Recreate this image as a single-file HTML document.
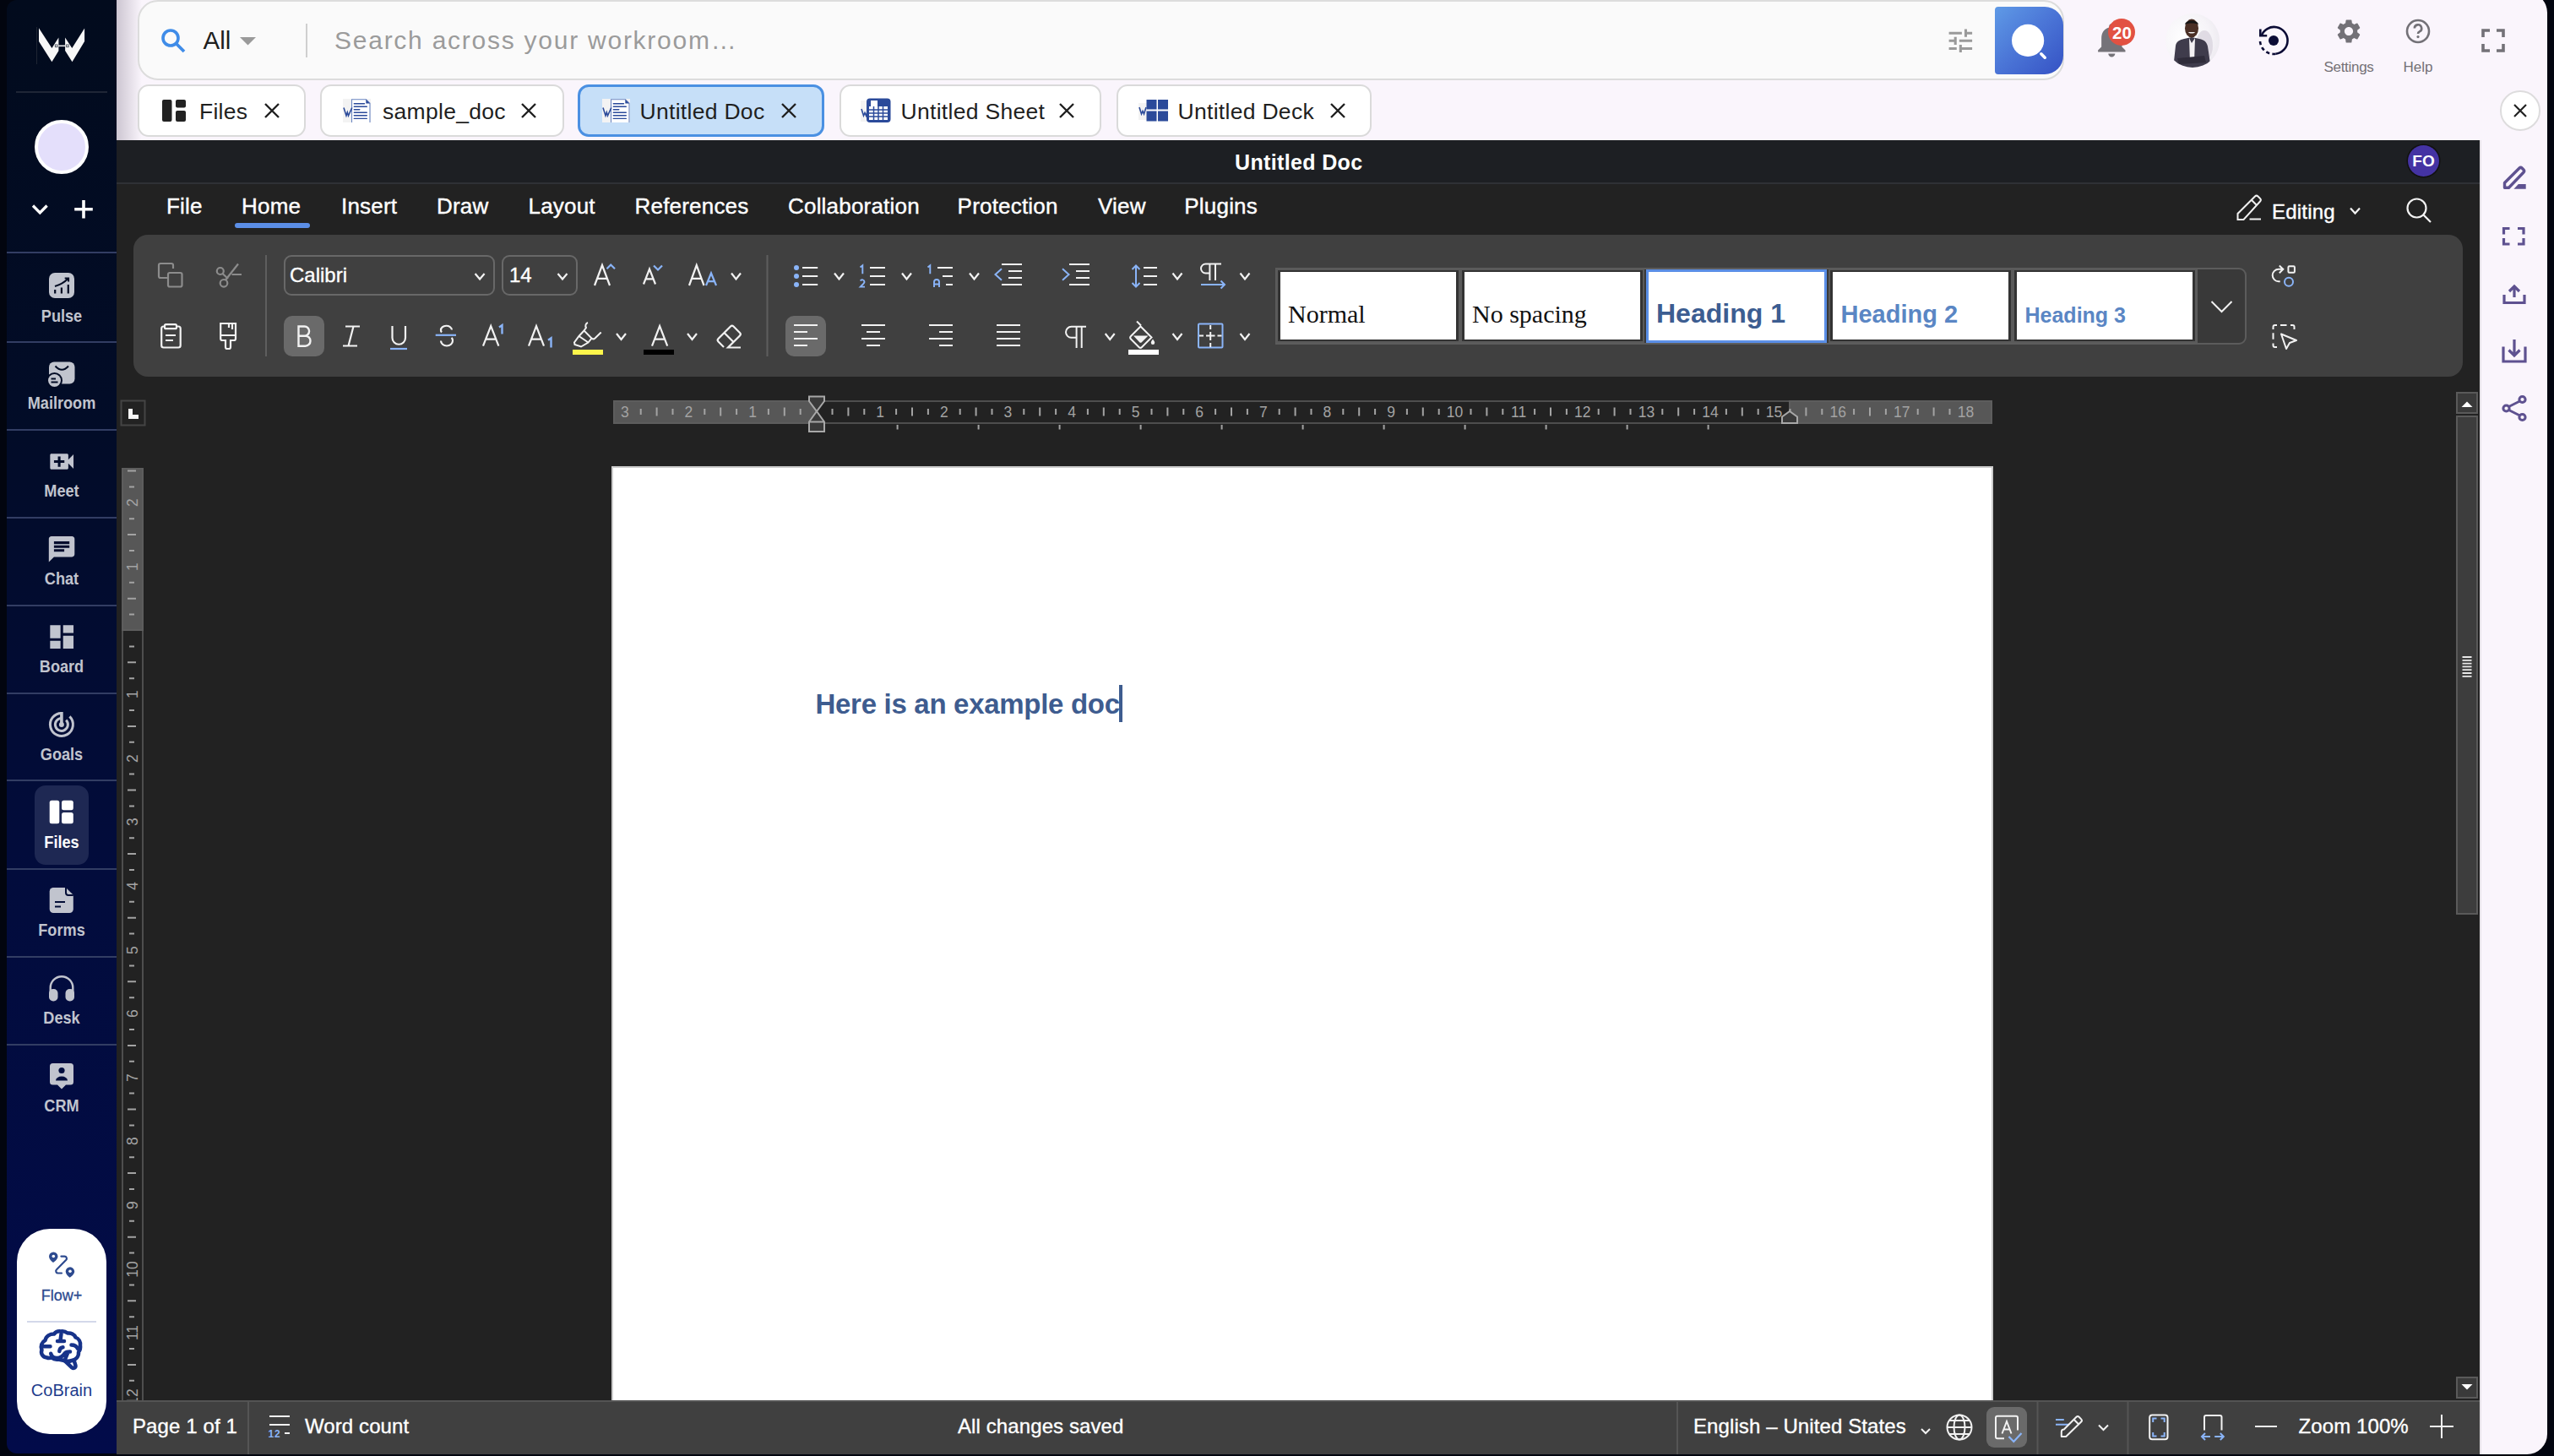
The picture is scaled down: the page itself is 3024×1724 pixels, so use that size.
<!DOCTYPE html>
<html><head><meta charset="utf-8">
<style>
*{box-sizing:border-box;margin:0;padding:0}
html,body{width:3024px;height:1724px;overflow:hidden}
body{position:relative;background:#02050f;font-family:"Liberation Sans",sans-serif}
.a{position:absolute}
svg{position:absolute;overflow:visible}
.sb{left:8px;top:0;width:130px;height:1721px;border-radius:12px 0 0 12px;background:linear-gradient(180deg,#020b1d 0%,#020c28 30%,#020c3c 60%,#020b4a 100%)}
.sep{left:8px;width:130px;height:3px;background:#2a3450}
.nav{left:0;width:146px;text-align:center;font-weight:bold;font-size:18px;color:#c3c5cf}
.shell{left:138px;top:-9px;width:2878px;height:1730.8px;background:#faf5fc;border-radius:0 24px 24px 0}
.tab{top:100px;height:62px;border:2px solid #dadada;border-radius:13px;background:#fff}
.tab .t{top:15px;font-size:26.5px;color:#1f1f1f;white-space:nowrap}
.menu{top:232px;font-size:26px;color:#fff;white-space:nowrap;letter-spacing:0.2px;-webkit-text-stroke:0.4px #fff}
.tb{stroke:#e8e8e8;fill:none;stroke-width:2.2}
.st{font-size:24px;color:#fff;white-space:nowrap;letter-spacing:0.1px;-webkit-text-stroke:0.35px #fff}
</style></head><body>
<!-- sidebar -->
<div class="a sb"></div>
<div class="a shell"></div>
<div class="a" style="left:43px;top:32px;width:1px;height:44px;background:#1e2533"></div>
<svg style="left:44px;top:32px" width="58" height="44" viewBox="0 0 58 44"><path d="M2 1.2L17.4 25.1L25.4 12.6V28.3L17.4 41.2L2 17.1Z" fill="#f7f7f7"/><path d="M56.1 1.4L41.3 24.9L33.1 12.4V28.1L41.5 41.2L56.1 17.1Z" fill="#f7f7f7"/><path d="M24.5 22.3H34" stroke="#e8e8e8" stroke-width="1.6"/><rect x="21.4" y="21" width="2.6" height="2.6" fill="none" stroke="#555b66" stroke-width="1"/><rect x="34.6" y="21" width="2.6" height="2.6" fill="none" stroke="#555b66" stroke-width="1"/></svg>
<div class="a" style="left:19px;top:108px;width:108px;height:2px;background:#1f2636"></div>
<div class="a" style="left:41px;top:142px;width:64px;height:64px;border-radius:50%;background:#e4dffb;border:4px solid #fff"></div>
<svg style="left:0;top:0" width="140" height="1724" viewBox="0 0 140 1724"><path d="M39 243.5L47.3 251.8L55.6 243.5" fill="none" stroke="#fff" stroke-width="3.3"/><path d="M99 237V258.5M88.2 247.7H109.8" stroke="#fff" stroke-width="3.6"/></svg>
<div class="a" style="left:8px;top:298.1px;width:130px;height:2.2px;background:#323d63"></div>
<div class="a" style="left:8px;top:403.9px;width:130px;height:2.2px;background:#323d63"></div>
<div class="a" style="left:8px;top:507.9px;width:130px;height:2.2px;background:#323d63"></div>
<div class="a" style="left:8px;top:611.5px;width:130px;height:2.2px;background:#323d63"></div>
<div class="a" style="left:8px;top:716.3px;width:130px;height:2.2px;background:#323d63"></div>
<div class="a" style="left:8px;top:819.5px;width:130px;height:2.2px;background:#323d63"></div>
<div class="a" style="left:8px;top:923.3px;width:130px;height:2.2px;background:#323d63"></div>
<div class="a" style="left:8px;top:1027.5px;width:130px;height:2.2px;background:#323d63"></div>
<div class="a" style="left:8px;top:1131.5px;width:130px;height:2.2px;background:#323d63"></div>
<div class="a" style="left:8px;top:1235.7px;width:130px;height:2.2px;background:#323d63"></div>
<div class="a" style="left:41px;top:930px;width:64px;height:94px;border-radius:13px;background:#1e2853"></div>
<div class="a" style="left:8px;top:363.6px;width:130px;text-align:center;font-size:20.5px;line-height:1;font-weight:bold;color:#c1c4ce;transform:scaleX(0.885)">Pulse</div>
<div class="a" style="left:8px;top:467.1px;width:130px;text-align:center;font-size:20.5px;line-height:1;font-weight:bold;color:#c1c4ce;transform:scaleX(0.885)">Mailroom</div>
<div class="a" style="left:8px;top:571.1px;width:130px;text-align:center;font-size:20.5px;line-height:1;font-weight:bold;color:#c1c4ce;transform:scaleX(0.885)">Meet</div>
<div class="a" style="left:8px;top:674.6px;width:130px;text-align:center;font-size:20.5px;line-height:1;font-weight:bold;color:#c1c4ce;transform:scaleX(0.885)">Chat</div>
<div class="a" style="left:8px;top:778.8px;width:130px;text-align:center;font-size:20.5px;line-height:1;font-weight:bold;color:#c1c4ce;transform:scaleX(0.885)">Board</div>
<div class="a" style="left:8px;top:882.9px;width:130px;text-align:center;font-size:20.5px;line-height:1;font-weight:bold;color:#c1c4ce;transform:scaleX(0.885)">Goals</div>
<div class="a" style="left:8px;top:986.9px;width:130px;text-align:center;font-size:20.5px;line-height:1;font-weight:bold;color:#fff;transform:scaleX(0.885)">Files</div>
<div class="a" style="left:8px;top:1090.6px;width:130px;text-align:center;font-size:20.5px;line-height:1;font-weight:bold;color:#c1c4ce;transform:scaleX(0.885)">Forms</div>
<div class="a" style="left:8px;top:1195.0px;width:130px;text-align:center;font-size:20.5px;line-height:1;font-weight:bold;color:#c1c4ce;transform:scaleX(0.885)">Desk</div>
<div class="a" style="left:8px;top:1299.1px;width:130px;text-align:center;font-size:20.5px;line-height:1;font-weight:bold;color:#c1c4ce;transform:scaleX(0.885)">CRM</div>
<svg style="left:0;top:0" width="140" height="1724" viewBox="0 0 140 1724"><rect x="58" y="323" width="30" height="30" rx="7" fill="#c1c4ce"/><path d="M65.2 343V347.5M72.9 340.5V347.5M80.8 337V347.5" stroke="#020b22" stroke-width="2.2"/><path d="M65 339Q74 336.5 80.5 330M76.7 329.4H81.1V333.6" fill="none" stroke="#020b22" stroke-width="2"/><rect x="58" y="428.5" width="30.5" height="26" rx="6" fill="#c1c4ce"/><path d="M65.5 433.5Q73.3 442 81 433.5" fill="none" stroke="#020b24" stroke-width="2"/><circle cx="64.5" cy="450.5" r="9.5" fill="#020b24"/><circle cx="64.5" cy="450.5" r="7.5" fill="#c1c4ce"/><path d="M60.5 448.5H66M60.5 452.5H68.5" stroke="#020b24" stroke-width="1.8"/><path transform="translate(54.7 528.06) scale(1.54)" fill="#c1c4ce" d="M17 10.5V7c0-.55-.45-1-1-1H4c-.55 0-1 .45-1 1v10c0 .55.45 1 1 1h12c.55 0 1-.45 1-1v-3.5l4 4v-11l-4 4zM14 13h-3v3H9v-3H6v-2h3V8h2v3h3v2z"/><path transform="translate(54.75 631.95) scale(1.525)" fill="#c1c4ce" d="M20 2H4c-1.1 0-1.99.9-1.99 2L2 22l4-4h14c1.1 0 2-.9 2-2V4c0-1.1-.9-2-2-2zM6 9h12v2H6V9zm8 5H6v-2h8v2zm4-6H6V6h12v2z"/><path transform="translate(54.7 735.7) scale(1.54)" fill="#c1c4ce" d="M3 13h8V3H3v10zm0 8h8v-6H3v6zm10 0h8V11h-8v10zm0-18v6h8V3h-8z"/><path d="M72.9 844.4A13.5 13.5 0 1 0 82.45 848.35" fill="none" stroke="#c1c4ce" stroke-width="3"/><path d="M72.9 850.4A7.5 7.5 0 1 0 78.2 852.6" fill="none" stroke="#c1c4ce" stroke-width="3"/><path d="M72.9 843V857" stroke="#c1c4ce" stroke-width="3.6"/><circle cx="72.9" cy="858" r="3" fill="#c1c4ce"/><rect x="58.7" y="947.7" width="11.6" height="27.5" rx="2.5" fill="#fff"/><rect x="73" y="947.7" width="13.8" height="11.5" rx="2.5" fill="#fff"/><rect x="73" y="962" width="13.8" height="13.2" rx="2.5" fill="#fff"/><path d="M63.5 1051H78L86.8 1059.8V1076.5a4.5 4.5 0 0 1-4.5 4.5H63.2a4.5 4.5 0 0 1-4.5-4.5V1055.5a4.5 4.5 0 0 1 4.5-4.5Z" fill="#c1c4ce"/><path d="M78 1051V1057a3 3 0 0 0 3 3H86.8" fill="none" stroke="#020d36" stroke-width="2"/><path d="M65 1068H77M65 1073.5H72" stroke="#020d36" stroke-width="2.2"/><path d="M59.7 1177V1169.5a13.3 13.3 0 0 1 26.6 0V1177" fill="none" stroke="#c1c4ce" stroke-width="2.4"/><rect x="58" y="1171" width="10.5" height="14.5" rx="5" fill="#c1c4ce"/><rect x="77.5" y="1171" width="10.5" height="14.5" rx="5" fill="#c1c4ce"/><path d="M62.5 1259H83.5a3.5 3.5 0 0 1 3.5 3.5V1281a3.5 3.5 0 0 1-3.5 3.5H78L73 1289.5L68 1284.5H62.5a3.5 3.5 0 0 1-3.5-3.5V1262.5a3.5 3.5 0 0 1 3.5-3.5Z" fill="#c1c4ce"/><circle cx="73" cy="1267.5" r="3.6" fill="#020e3e"/><path d="M66 1279.5a7 5 0 0 1 14 0Z" fill="#020e3e"/></svg>
<div class="a" style="left:20px;top:1454.5px;width:106px;height:243.5px;border-radius:39px;background:#fff"></div>
<div class="a" style="left:32px;top:1564px;width:82px;height:2px;background:#d3d8ea"></div>
<svg style="left:0;top:0" width="140" height="1724" viewBox="0 0 140 1724"><path d="M63.3 1482.5a5.3 5.3 0 0 0-5.3 5.3c0 3 2.5 5.3 5 7.2c2.5-1.9 5.5-4.2 5.5-7.2a5.3 5.3 0 0 0-5.2-5.3Z" fill="#2d4a8f"/><circle cx="63.3" cy="1487.5" r="1.8" fill="#fff"/><path d="M83 1500.3a5.3 5.3 0 0 0-5.3 5.3c0 3 2.5 5.3 5 7.2c2.5-1.9 5.5-4.2 5.5-7.2a5.3 5.3 0 0 0-5.2-5.3Z" fill="#2d4a8f"/><circle cx="83" cy="1505.3" r="1.8" fill="#fff"/><path d="M72.4 1487.6H76.5a2.5 2.5 0 0 1 1.8 4.2L67 1503.2a2.5 2.5 0 0 0 1.8 4.3H73" fill="none" stroke="#2d4a8f" stroke-width="2.2" stroke-linecap="round"/><g fill="none" stroke="#17338a" stroke-width="4.5" stroke-linecap="round" stroke-linejoin="round"><path d="M55.5 1607.5C50 1607 48 1602 49.5 1598.5C47.5 1594 49.5 1589 53.5 1587C54.5 1582 59 1579.5 64 1579.5C66 1577 69 1576 72 1576.5C75 1576 78 1577 80 1578.5C84 1578 88 1580 89.5 1583.5C93.5 1585 95.5 1589 95 1593C95.5 1596 94.5 1599 93 1601C93.5 1606 90 1610 85 1611C82 1612 79 1612 76 1611L69 1609.5C66 1610 63 1609 61 1607.5C59 1608 57 1608 55.5 1607.5Z"/><path d="M76.5 1611L85.2 1619.3a2.6 2.6 0 0 0 4.2-2.6L87.8 1611.3"/><path d="M72.5 1579.5L71.5 1587M68 1588H76M51 1594.2H59.5M74.5 1595.2C72 1595.5 70.5 1597.5 70.3 1600M84.5 1592.5C88 1592.5 91 1594.5 92 1597M60.2 1602.7C61 1606 64 1608 67.5 1608C72 1608 75 1605 77 1602C78 1601 80 1600.5 83 1600.5M80 1602.5L77.5 1608.5"/></g></svg>
<div class="a" style="left:8px;top:1524.6px;width:130px;text-align:center;font-size:18px;line-height:1;color:#2b4a90;-webkit-text-stroke:0.3px #2b4a90">Flow+</div>
<div class="a" style="left:8px;top:1635.5px;width:130px;text-align:center;font-size:20px;line-height:1;color:#1d3c8c">CoBrain</div>
<!-- shadow at left of top bar -->
<div class="a" style="left:138px;top:0;width:30px;height:166px;background:linear-gradient(90deg,rgba(120,110,130,.35),rgba(249,244,251,0))"></div>


<!-- ===== TOP BAR ===== -->
<svg width="0" height="0" style="position:absolute">
<defs>
<symbol id="docic" viewBox="0 0 33 28">
<rect x="0" y="0" width="33" height="28" fill="#f3f3f3"/>
<path d="M10.5 28V0.8H27.5L32 5.3V28" fill="#fff" stroke="#6b86c2" stroke-width="1.1"/>
<path d="M27.3 0.8V5.5H32Z" fill="#2b4a9a"/>
<g stroke="#2b4a9a" stroke-width="1.4" stroke-linecap="round">
<path d="M13.3 5.7H25.5M13.3 9.3H28.3M13.3 12.8H19.8M13.3 16.3H28.3M13.3 19.8H28.3M13.3 23.4H28.3"/>
</g>
<path d="M1 10.5L4 20L5.3 16L6.5 20L10.8 10.5" fill="none" stroke="#2b4a9a" stroke-width="1.6"/>
</symbol>
<symbol id="xic" viewBox="0 0 18 18"><path d="M1 1L17 17M17 1L1 17" stroke="#1f1f1f" stroke-width="2.4"/></symbol>
</defs></svg>

<div class="a" style="left:163px;top:0px;width:2281px;height:95px;border:2px solid #dcdcdc;border-radius:24px;background:#fafafa"></div>
<svg style="left:190px;top:33px" width="32" height="30" viewBox="0 0 32 30"><circle cx="12" cy="12" r="9" fill="none" stroke="#3f8ce8" stroke-width="3.6"/><path d="M18.5 18.5L28 28" stroke="#3f8ce8" stroke-width="3.8"/></svg>
<div class="a" style="left:240.5px;top:33.4px;font-size:29.5px;line-height:1;color:#1f1f1f">All</div>
<svg style="left:284px;top:44px" width="19" height="10" viewBox="0 0 19 10"><path d="M0 0H19L9.5 9.5Z" fill="#9a9a9a"/></svg>
<div class="a" style="left:362px;top:28px;width:2px;height:40px;background:#cfcfcf"></div>
<div class="a" style="left:396px;top:33px;font-size:30px;line-height:1;color:#9b9b9b;letter-spacing:1.75px;white-space:nowrap">Search across your workroom…</div>
<svg style="left:2303.4px;top:29.6px" width="36.7" height="36.7" viewBox="0 0 24 24"><path fill="#9a9a9a" d="M3 17v2h6v-2H3zM3 5v2h10V5H3zm10 16v-2h8v-2h-8v-2h-2v6h2zM7 9v2H3v2h4v2h2V9H7zm14 4v-2H11v2h10zm-6-4h2V7h4V5h-4V3h-2v6z"/></svg>
<div class="a" style="left:2362px;top:8px;width:81px;height:80px;border-radius:4px 22px 22px 4px;background:linear-gradient(135deg,#5f9ae6 0%,#4a74d6 50%,#3552c4 100%)"></div>
<svg style="left:0;top:0" width="3024" height="100" viewBox="0 0 3024 100"><circle cx="2401.1" cy="47.9" r="19.1" fill="#fff"/><path d="M2416.8 63.8L2421.2 68.2" stroke="#fff" stroke-width="3.6" stroke-linecap="round"/></svg>
<!-- bell -->
<svg style="left:2475.9px;top:23.45px" width="48.6" height="48.6" viewBox="0 0 24 24"><path fill="#757379" d="M12 22c1.1 0 2-.9 2-2h-4c0 1.1.89 2 2 2zm6-6v-5c0-3.07-1.64-5.64-4.5-6.32V4c0-.83-.67-1.5-1.5-1.5s-1.5.67-1.5 1.5v.68C7.63 5.36 6 7.92 6 11v5l-2 2v1h16v-1l-2-2z"/></svg>
<div class="a" style="left:2496.4px;top:22.2px;width:31.8px;height:31.8px;border-radius:50%;background:#e25142"></div>
<div class="a" style="left:2492px;top:29px;width:41px;text-align:center;font-size:20.5px;line-height:1;font-weight:bold;color:#fff">20</div>
<!-- avatar -->
<div class="a" style="left:2564px;top:15.6px;width:64px;height:64px;border-radius:50%;overflow:hidden;background:radial-gradient(circle at 35% 45%,#ffffff 0%,#f6f4f8 55%,#e6e2ea 100%)">
<svg style="left:0;top:0" width="64" height="64" viewBox="0 0 64 64"><ellipse cx="46" cy="38" rx="10" ry="18" fill="#d9d4df" opacity=".8"/><path d="M9 66L12 38C13 33 17 31 22 30L31 28L40 30C46 31 49 34 50 39L54 66Z" fill="#3f3c4c"/><path d="M28 29L31 35L35 29L34 58H29Z" fill="#f4f2f4"/><path d="M14 53L46 50L48 58L16 60Z" fill="#2f2c3a"/><ellipse cx="31" cy="17.5" rx="8" ry="11" fill="#4a2f25"/><path d="M23 13c1-6 15-6 16 0c-3-2-13-2-16 0Z" fill="#151515"/><path d="M27 22h8c-1 2-7 2-8 0Z" fill="#f0f0f0"/></svg></div>
<!-- record icon -->
<svg style="left:2670px;top:26px" width="44" height="44" viewBox="0 0 44 44"><path d="M7.5 16.5A16 16 0 1 1 24.5 37.8" fill="none" stroke="#0b0b35" stroke-width="2.6"/><path d="M24.5 37.8A16 16 0 0 1 6 22" fill="none" stroke="#0b0b35" stroke-width="2.6" stroke-dasharray="4.2 3.2"/><path d="M6.3 8.5V16.3H14.2" fill="none" stroke="#0b0b35" stroke-width="2.6"/><circle cx="22" cy="22" r="6" fill="#0b0b35"/></svg>
<!-- settings -->
<svg style="left:2764px;top:19.7px" width="34" height="34" viewBox="0 0 24 24"><path fill="#737177" d="M19.14 12.94c.04-.3.06-.61.06-.94 0-.32-.02-.64-.07-.94l2.03-1.58a.49.49 0 0 0 .12-.61l-1.92-3.32a.488.488 0 0 0-.59-.22l-2.39.96c-.5-.38-1.03-.7-1.62-.94l-.36-2.54a.484.484 0 0 0-.48-.41h-3.84c-.24 0-.43.17-.47.41l-.36 2.54c-.59.24-1.13.57-1.62.94l-2.39-.96c-.22-.08-.47 0-.59.22L2.74 8.87c-.12.21-.08.47.12.61l2.03 1.58c-.05.3-.09.63-.09.94s.02.64.07.94l-2.03 1.58a.49.49 0 0 0-.12.61l1.92 3.32c.12.22.37.29.59.22l2.39-.96c.5.38 1.03.7 1.62.94l.36 2.54c.05.24.24.41.48.41h3.84c.24 0 .44-.17.47-.41l.36-2.54c.59-.24 1.13-.56 1.62-.94l2.39.96c.22.08.47 0 .59-.22l1.92-3.32c.12-.22.07-.47-.12-.61l-2.01-1.58zM12 15.6c-1.98 0-3.6-1.62-3.6-3.6s1.62-3.6 3.6-3.6 3.6 1.62 3.6 3.6-1.62 3.6-3.6 3.6z"/></svg>
<div class="a" style="left:2731px;top:71px;width:100px;text-align:center;font-size:17px;line-height:1;color:#747176;letter-spacing:-0.3px">Settings</div>
<svg style="left:2848px;top:22px" width="30" height="30" viewBox="0 0 30 30"><circle cx="15" cy="15" r="13" fill="none" stroke="#737177" stroke-width="2.6"/><path d="M10.8 11.5a4.2 4.2 0 1 1 6 3.8c-1.2.6-1.8 1.3-1.8 2.7" fill="none" stroke="#737177" stroke-width="2.6"/><circle cx="15" cy="21.6" r="1.6" fill="#737177"/></svg>
<div class="a" style="left:2813px;top:71px;width:100px;text-align:center;font-size:17px;line-height:1;color:#747176;letter-spacing:0px">Help</div>
<svg style="left:2938px;top:34px" width="28" height="28" viewBox="0 0 28 28"><path d="M2 10V2H10M18 2H26V10M26 18V26H18M10 26H2V18" fill="none" stroke="#737177" stroke-width="3.6"/></svg>
<div class="a" style="left:2960.2px;top:107px;width:47.6px;height:47.6px;border-radius:50%;border:2px solid #dddcdd;background:#fff"></div>
<svg style="left:2976px;top:123px" width="16" height="16" viewBox="0 0 16 16"><path d="M1 1L15 15M15 1L1 15" stroke="#222" stroke-width="2.2"/></svg>

<!-- tabs -->
<div class="a tab" style="left:163px;width:199px"></div>
<svg style="left:192px;top:118px" width="28" height="26" viewBox="0 0 28 26"><rect x="0" y="0" width="11.5" height="26" rx="2" fill="#222"/><rect x="16" y="0" width="12" height="9.5" rx="2" fill="#222"/><rect x="16" y="13" width="12" height="13" rx="2" fill="#222"/></svg>
<div class="a" style="left:236px;top:118.6px;font-size:26.5px;line-height:1;color:#1f1f1f;letter-spacing:0.25px">Files</div>
<svg style="left:313px;top:122px" width="18" height="18"><use href="#xic"/></svg>

<div class="a tab" style="left:379px;width:289px"></div>
<svg style="left:406px;top:117px" width="33" height="28"><use href="#docic"/></svg>
<div class="a" style="left:453px;top:118.6px;font-size:26.5px;line-height:1;color:#1f1f1f;letter-spacing:0.3px">sample_doc</div>
<svg style="left:617px;top:122px" width="18" height="18"><use href="#xic"/></svg>

<div class="a tab" style="left:684px;width:292px;background:#c6dff8;border:3px solid #4a90e2"></div>
<svg style="left:713px;top:117px" width="33" height="28"><use href="#docic"/></svg>
<div class="a" style="left:757.5px;top:118.6px;font-size:26.5px;line-height:1;color:#1f1f1f;letter-spacing:0.3px">Untitled Doc</div>
<svg style="left:925px;top:122px" width="18" height="18"><use href="#xic"/></svg>

<div class="a tab" style="left:994px;width:310px"></div>
<svg style="left:1019px;top:116px" width="36" height="30" viewBox="0 0 36 30"><rect x="0" y="3" width="10" height="25" fill="#f3f3f3"/><rect x="7" y="0.5" width="28.5" height="28.5" rx="4" fill="#2b4a9a"/><rect x="10" y="10" width="22" height="16" fill="#fff"/><g stroke="#2b4a9a" stroke-width="1.5"><path d="M10 14H32M10 18H32M10 22H32M15.5 10V26M21 10V26M26.5 10V26"/></g><rect x="12" y="3" width="8" height="7" fill="#fff"/><path d="M1 13L3.5 21L5 17.5L6.5 21L9 13" fill="none" stroke="#2b4a9a" stroke-width="1.6"/></svg>
<div class="a" style="left:1066.5px;top:118.6px;font-size:26.5px;line-height:1;color:#1f1f1f;letter-spacing:0.3px">Untitled Sheet</div>
<svg style="left:1254px;top:122px" width="18" height="18"><use href="#xic"/></svg>

<div class="a tab" style="left:1322px;width:302px"></div>
<svg style="left:1348px;top:118px" width="36" height="26" viewBox="0 0 36 26"><rect x="0" y="4" width="10" height="20" fill="#f3f3f3"/><rect x="9.5" y="0" width="12" height="11.5" fill="#2b4a9a"/><rect x="23" y="0" width="12" height="11.5" fill="#2b4a9a"/><rect x="9.5" y="13.5" width="12" height="12" fill="#2b4a9a"/><rect x="23" y="13.5" width="12" height="12" fill="#2b4a9a"/><path d="M1 9L3.5 17L5 13.5L6.5 17L9 9" fill="none" stroke="#2b4a9a" stroke-width="1.6"/></svg>
<div class="a" style="left:1394.5px;top:118.6px;font-size:26.5px;line-height:1;color:#1f1f1f;letter-spacing:0.3px">Untitled Deck</div>
<svg style="left:1575px;top:122px" width="18" height="18"><use href="#xic"/></svg>

<!-- editor dark -->
<div class="a" style="left:138px;top:166px;width:2798px;height:1556px;background:#222222"></div>
<div class="a" style="left:2936px;top:166px;width:1.5px;height:1556px;background:#e6e2e8"></div>
<div class="a" style="left:138px;top:166px;width:2798px;height:52px;background:#1d1f23;border-bottom:2px solid #2f3136"></div>
<div class="a" style="left:1462px;top:180.2px;font-size:25px;line-height:1;font-weight:bold;color:#fff;letter-spacing:0.35px">Untitled Doc</div>
<div class="a" style="left:2851px;top:172px;width:37px;height:37px;border-radius:50%;background:#4433a3;box-shadow:0 0 0 1.5px #111"></div>
<div class="a" style="left:2851px;top:181px;width:37px;text-align:center;font-size:19px;line-height:1;font-weight:bold;color:#fff">FO</div>

<!-- menu -->
<div class="a menu" style="left:197px;top:231px;line-height:1">File</div>
<div class="a menu" style="left:286px;top:231px;line-height:1">Home</div>
<div class="a menu" style="left:404px;top:231px;line-height:1">Insert</div>
<div class="a menu" style="left:517px;top:231px;line-height:1">Draw</div>
<div class="a menu" style="left:625.5px;top:231px;line-height:1">Layout</div>
<div class="a menu" style="left:751.5px;top:231px;line-height:1">References</div>
<div class="a menu" style="left:933px;top:231px;line-height:1">Collaboration</div>
<div class="a menu" style="left:1133.6px;top:231px;line-height:1">Protection</div>
<div class="a menu" style="left:1300px;top:231px;line-height:1">View</div>
<div class="a menu" style="left:1402.3px;top:231px;line-height:1">Plugins</div>
<div class="a" style="left:278px;top:264px;width:89px;height:6px;border-radius:3px;background:#5b8ee6"></div>
<div class="a menu" style="left:2690px;top:238.7px;font-size:24px;line-height:1">Editing</div>

<!-- toolbar panel -->
<div class="a" style="left:158px;top:278px;width:2758px;height:168px;border-radius:17px;background:#404040"></div>
<div class="a" style="left:336px;top:302px;width:250px;height:48px;border:2px solid #686868;border-radius:9px"></div>
<div class="a" style="left:343px;top:313.7px;font-size:24px;line-height:1;color:#fff;-webkit-text-stroke:0.35px #fff">Calibri</div>
<div class="a" style="left:594px;top:302px;width:90px;height:48px;border:2px solid #686868;border-radius:9px"></div>
<div class="a" style="left:603px;top:313.7px;font-size:24px;line-height:1;color:#fff;-webkit-text-stroke:0.35px #fff">14</div>
<div class="a" style="left:336px;top:374px;width:48px;height:48px;border-radius:10px;background:#6a6a6a"></div>
<div class="a" style="left:930px;top:374px;width:48px;height:48px;border-radius:10px;background:#6a6a6a"></div>

<svg style="left:0;top:0" width="3024" height="1724" viewBox="0 0 3024 1724"><path d="M205 318V314a2 2 0 0 0-2-2H190a2 2 0 0 0-2 2V327a2 2 0 0 0 2 2H198" fill="none" stroke="#8c8c8c" stroke-width="2.2"/><rect x="199" y="323" width="16.5" height="16.5" rx="2" fill="none" stroke="#8c8c8c" stroke-width="2.2"/><circle cx="260.8" cy="321" r="4" fill="none" stroke="#8c8c8c" stroke-width="2.2"/><circle cx="265" cy="335.3" r="4.3" fill="none" stroke="#8c8c8c" stroke-width="2.2"/><path d="M263.5 324L270 330M267 331.5L282 312.5M274.5 325H286" fill="none" stroke="#8c8c8c" stroke-width="2.2"/><path d="M315 302V422M908.5 302V422" stroke="#5e5e5e" stroke-width="2"/><rect x="191.2" y="386.5" width="22.5" height="25" rx="2.5" fill="none" stroke="#f2f2f2" stroke-width="2.2"/><rect x="195" y="384.2" width="14" height="5" rx="1.5" fill="#404040" stroke="#f2f2f2" stroke-width="2.2"/><path d="M196 397H208M196 403H205" stroke="#f2f2f2" stroke-width="2.2"/><path d="M261.2 383H279V401a2 2 0 0 1-2 2H273V411a2 2 0 0 1-2 2H269a2 2 0 0 1-2-2V403H263.2a2 2 0 0 1-2-2Z M261.2 397H279 M271 383V388 M275 383V390" fill="none" stroke="#f2f2f2" stroke-width="2.2"/><path d="M562.6 324L568.1 330.5L573.6 324" fill="none" stroke="#f2f2f2" stroke-width="2.2"/><path d="M660.5 324L666.0 330.5L671.5 324" fill="none" stroke="#f2f2f2" stroke-width="2.2"/><path d="M704 338L713.0 314L722 338M707.6 329.84H718.4" fill="none" stroke="#f2f2f2" stroke-width="2.2" stroke-linejoin="miter"/><path d="M718.5 318.3L723.2 313.5L728 318.3" fill="none" stroke="#8ab4f8" stroke-width="2.2"/><path d="M762 336.5L769.0 318.5L776 336.5M764.8 330.38H773.2" fill="none" stroke="#f2f2f2" stroke-width="2.2" stroke-linejoin="miter"/><path d="M774 314.5L779 319.5L784 314.5" fill="none" stroke="#8ab4f8" stroke-width="2.2"/><path d="M816 338L824.75 314L833.5 338M819.5 329.84H830.0" fill="none" stroke="#f2f2f2" stroke-width="2.2" stroke-linejoin="miter"/><path d="M836 338.0L842.0 323.5L848 338.0M838.4 333.07H845.6" fill="none" stroke="#8ab4f8" stroke-width="2.2" stroke-linejoin="miter"/><path d="M866 323.5L871.5 330.5L877 323.5" fill="none" stroke="#f2f2f2" stroke-width="2.2"/><path d="M353.5 386.5H360.5a5.6 5.6 0 0 1 0 11.2H353.5ZM353.5 397.7H361.5a6 6 0 0 1 0 12H353.5Z" fill="none" stroke="#f2f2f2" stroke-width="2.4"/><path d="M409 386.5H426M406 409.5H423M418.5 386.5L412.5 409.5" fill="none" stroke="#f2f2f2" stroke-width="2.2"/><path d="M464.5 386V400a7.75 7.75 0 0 0 15.5 0V386" fill="none" stroke="#f2f2f2" stroke-width="2.2"/><path d="M462 413H482" stroke="#8ab4f8" stroke-width="2.2"/><path d="M535 390.5a6.5 5 0 0 0-13 0.5a6 4 0 0 0 1 2.5M522 403.5a7 6 0 0 0 14 0a5 4 0 0 0-1.5-3.5" fill="none" stroke="#f2f2f2" stroke-width="2.2"/><path d="M515.7 396.8H540" stroke="#8ab4f8" stroke-width="2.2"/><path d="M572 409.6L581.2 386L590.4 409.6M575.68 401.576H586.72" fill="none" stroke="#f2f2f2" stroke-width="2.2" stroke-linejoin="miter"/><path d="M591 387.5L594.5 385V395.5" fill="none" stroke="#8ab4f8" stroke-width="2.4"/><path d="M626 409.6L635.0 386L644 409.6M629.6 401.576H640.4" fill="none" stroke="#f2f2f2" stroke-width="2.2" stroke-linejoin="miter"/><path d="M649 402.8L652.5 400.3V411.5" fill="none" stroke="#8ab4f8" stroke-width="2.4"/><path d="M696 382a4 4 0 0 0-2 6L691.5 391.5L700.5 400.5L696.5 405.5L688 410.5L680.5 408L680 405.5L685.5 398L691.5 391.5M685.5 398L696.5 405.5M700.5 400.5a3 3 0 0 0 4 0L711.7 393.5" fill="none" stroke="#f2f2f2" stroke-width="2"/><rect x="678" y="414" width="36" height="6" fill="#fdf54b"/><path d="M730 395L735.5 402L741 395" fill="none" stroke="#f2f2f2" stroke-width="2.2"/><path d="M772 409.6L781.1 386L790.2 409.6M775.64 401.576H786.56" fill="none" stroke="#f2f2f2" stroke-width="2.2" stroke-linejoin="miter"/><rect x="762" y="414" width="36" height="6" fill="#000"/><path d="M814 395L819.5 402L825 395" fill="none" stroke="#f2f2f2" stroke-width="2.2"/><path d="M857 411L850.5 404.5a2.5 2.5 0 0 1 0-3.5L865 386.5a2.5 2.5 0 0 1 3.5 0L876 394a2.5 2.5 0 0 1 0 3.5L862 411.5H877M857.5 394L868.5 405" fill="none" stroke="#f2f2f2" stroke-width="2.2"/><g fill="#8ab4f8"><circle cx="943" cy="317" r="3"/><circle cx="943" cy="327" r="3"/><circle cx="943" cy="337" r="3"/></g><path d="M950 317H968.2M950 327H968.2M950 337H968.2" stroke="#f2f2f2" stroke-width="2"/><path d="M988 323.5L993.5 330.5L999 323.5" fill="none" stroke="#f2f2f2" stroke-width="2.2"/><path d="M1018.5 316.5L1021.3 314.2V324.3M1018.7 332.5a2.6 2.6 0 0 1 4.8 1.3c0 1.5-1.6 2.6-4.8 5.8H1024" fill="none" stroke="#8ab4f8" stroke-width="1.9"/><path d="M1030 317H1048M1030 327H1048M1030 337H1048" stroke="#f2f2f2" stroke-width="2"/><path d="M1068 323.5L1073.5 330.5L1079 323.5" fill="none" stroke="#f2f2f2" stroke-width="2.2"/><path d="M1098.5 316.5L1101.3 314.2V324.3M1106 340V334a3 3 0 0 1 6 0V340M1106 336.5H1112" fill="none" stroke="#8ab4f8" stroke-width="1.9"/><path d="M1110 317H1128M1116 327H1128M1120 337H1128" stroke="#f2f2f2" stroke-width="2"/><path d="M1148 323.5L1153.5 330.5L1159 323.5" fill="none" stroke="#f2f2f2" stroke-width="2.2"/><path d="M1186 313H1210M1194 321H1210M1194 329H1210M1186 337H1210" stroke="#f2f2f2" stroke-width="2"/><path d="M1186 318.3L1178.5 325L1186 331.7" fill="none" stroke="#8ab4f8" stroke-width="2"/><path d="M1266 313H1290M1274 321H1290M1274 329H1290M1266 337H1290" stroke="#f2f2f2" stroke-width="2"/><path d="M1258 318.3L1265.5 325L1258 331.7" fill="none" stroke="#8ab4f8" stroke-width="2"/><path d="M1345 315V339M1340.5 319L1345 314.5L1349.5 319M1340.5 335L1345 339.5L1349.5 335" fill="none" stroke="#8ab4f8" stroke-width="2"/><path d="M1354 317H1370M1354 327H1370M1354 337H1370" stroke="#f2f2f2" stroke-width="2"/><path d="M1388.5 323.5L1394.0 330.5L1399.5 323.5" fill="none" stroke="#f2f2f2" stroke-width="2.2"/><path d="M1432.4 312.5H1427.5a5.5 5.5 0 0 0 0 11H1432.4M1432.4 312.5V332M1439 312.5V332M1432.4 312.5H1446" fill="none" stroke="#f2f2f2" stroke-width="2"/><path d="M1422 337H1450M1445.5 332.5L1450 337L1445.5 341.5" fill="none" stroke="#8ab4f8" stroke-width="2"/><path d="M1468.5 323.5L1474.0 330.5L1479.5 323.5" fill="none" stroke="#f2f2f2" stroke-width="2.2"/><path d="M940 385H968M940 393H956M940 401H968M940 409H956" stroke="#f2f2f2" stroke-width="2"/><path d="M1020 385H1048M1026 393H1042M1020 401H1048M1026 409H1042" stroke="#f2f2f2" stroke-width="2"/><path d="M1100 385H1128M1112 393H1128M1100 401H1128M1112 409H1128" stroke="#f2f2f2" stroke-width="2"/><path d="M1180 385H1208M1180 393H1208M1180 401H1208M1180 409H1208" stroke="#f2f2f2" stroke-width="2"/><path d="M1274.6 386.8H1268.5a6.5 6.5 0 0 0 0 13H1274.6M1274.6 386.8V412M1280.7 386.8V412M1274.6 386.8H1286" fill="none" stroke="#f2f2f2" stroke-width="2"/><path d="M1308.7 395L1314.2 402L1319.7 395" fill="none" stroke="#f2f2f2" stroke-width="2.2"/><path d="M1346 380.5L1351 385.5M1350.5 386.5L1363.5 399.5L1352 411a2.5 2.5 0 0 1-3.5 0L1339 401.5a2.5 2.5 0 0 1 0-3.5Z" fill="none" stroke="#f2f2f2" stroke-width="2"/><path d="M1342 397.5H1359.5L1352 405a2 2 0 0 1-3 0Z" fill="#f2f2f2"/><path d="M1365 401.5c-1.5 2.2-2.2 3.3-2.2 4.3a2.2 2.2 0 0 0 4.4 0c0-1-0.7-2.1-2.2-4.3Z" fill="#f2f2f2"/><rect x="1336" y="414" width="36" height="6" fill="#fff"/><path d="M1388.5 395L1394.0 402L1399.5 395" fill="none" stroke="#f2f2f2" stroke-width="2.2"/><rect x="1419" y="383.5" width="28.5" height="28" rx="1" fill="none" stroke="#8ab4f8" stroke-width="2"/><path d="M1433.2 385V390M1433.2 393V403M1433.2 406V411M1420 397.5H1425M1428 397.5H1438.5M1441.5 397.5H1446.5" stroke="#f2f2f2" stroke-width="2"/><path d="M1468.5 395L1474.0 402L1479.5 395" fill="none" stroke="#f2f2f2" stroke-width="2.2"/><path d="M2618.5 357L2630.5 369L2642.5 357" fill="none" stroke="#f2f2f2" stroke-width="2"/><path d="M2699.7 333.3H2698a7.3 7.3 0 0 1 0-14.6H2703.5M2698.8 314.5L2703.3 318.8L2698.8 323.2" fill="none" stroke="#f2f2f2" stroke-width="2"/><rect x="2709.4" y="315.3" width="7.5" height="7.5" rx="1.2" fill="none" stroke="#f2f2f2" stroke-width="2"/><circle cx="2710" cy="333.8" r="5" fill="none" stroke="#8ab4f8" stroke-width="2"/><path d="M2691.5 390V387a2 2 0 0 1 2-2H2696M2700 385H2707.5M2712 385H2714.5a2 2 0 0 1 2 2V390M2691.5 394.3V401.8M2691.5 406.5V409a2 2 0 0 0 2 2H2696" fill="none" stroke="#f2f2f2" stroke-width="2"/><path d="M2701 395.5L2719 403L2711 406L2707 413Z" fill="none" stroke="#f2f2f2" stroke-width="2" stroke-linejoin="round"/><path d="M2649.5 260V253L2670 232.5a2.5 2.5 0 0 1 3.5 0L2676 235a2.5 2.5 0 0 1 0 3.5L2656.5 260Z M2665.8 236.8L2672 243M2663.5 259.5H2677" fill="none" stroke="#f2f2f2" stroke-width="2"/><path d="M2783 246.5L2788.5 252.5L2794 246.5" fill="none" stroke="#f2f2f2" stroke-width="2.2"/><circle cx="2861.5" cy="246.5" r="11" fill="none" stroke="#f2f2f2" stroke-width="2.2"/><path d="M2869.5 254.5L2878 263" stroke="#f2f2f2" stroke-width="2.2"/></svg>
<!-- style gallery -->
<div class="a" style="left:1510px;top:316.5px;width:1150px;height:91px;border:2px solid #5c5c5c;border-radius:0 9px 9px 0;background:#393939"></div>
<div class="a" style="left:2600px;top:318px;width:2px;height:88px;background:#5c5c5c"></div>
<div class="a" style="left:1511px;top:318px;width:218px;height:88px;border:2px solid #5a5a5a;background:#333"></div><div class="a" style="left:1729px;top:318px;width:218px;height:88px;border:2px solid #5a5a5a;background:#333"></div><div class="a" style="left:2165px;top:318px;width:218px;height:88px;border:2px solid #5a5a5a;background:#333"></div><div class="a" style="left:2382.5px;top:318px;width:218.5px;height:88px;border:2px solid #5a5a5a;background:#333"></div><div class="a" style="left:1516px;top:322px;width:208px;height:80px;background:#fff"></div>
<div class="a" style="left:1734px;top:322px;width:208px;height:80px;background:#fff"></div>
<div class="a" style="left:1949px;top:318.5px;width:214px;height:87px;border:3px solid #5a8ee6;background:#fff"></div>
<div class="a" style="left:2170px;top:322px;width:208px;height:80px;background:#fff"></div>
<div class="a" style="left:2387.5px;top:322px;width:208.5px;height:80px;background:#fff"></div>
<div class="a" style="left:1525px;top:356.6px;font-family:'Liberation Serif',serif;font-size:30px;line-height:1;color:#111">Normal</div>
<div class="a" style="left:1743px;top:356.6px;font-family:'Liberation Serif',serif;font-size:30px;line-height:1;color:#111">No spacing</div>
<div class="a" style="left:1961px;top:354.9px;font-size:32px;line-height:1;font-weight:bold;color:#3c5d91">Heading 1</div>
<div class="a" style="left:2179.5px;top:357.6px;font-size:29px;line-height:1;font-weight:bold;color:#5a86c4">Heading 2</div>
<div class="a" style="left:2397.5px;top:360.7px;font-size:25px;line-height:1;font-weight:bold;color:#5a86c4">Heading 3</div>


<div class="a" style="left:726px;top:474px;width:1633px;height:28px;border:2px solid #4e4e4e;background:#222"></div>
<div class="a" style="left:726px;top:474px;width:241px;height:28px;background:#575757;border:2px solid #5d5d5d"></div>
<div class="a" style="left:2118px;top:474px;width:241px;height:28px;background:#575757;border:2px solid #5d5d5d"></div>
<div class="a" style="left:719.8px;top:479.5px;width:40px;text-align:center;font-size:17.5px;line-height:1;color:#a3a3a3">3</div>
<div class="a" style="left:795.4px;top:479.5px;width:40px;text-align:center;font-size:17.5px;line-height:1;color:#a3a3a3">2</div>
<div class="a" style="left:871.0px;top:479.5px;width:40px;text-align:center;font-size:17.5px;line-height:1;color:#a3a3a3">1</div>
<div class="a" style="left:1022.2px;top:479.5px;width:40px;text-align:center;font-size:17.5px;line-height:1;color:#a3a3a3">1</div>
<div class="a" style="left:1097.8px;top:479.5px;width:40px;text-align:center;font-size:17.5px;line-height:1;color:#a3a3a3">2</div>
<div class="a" style="left:1173.4px;top:479.5px;width:40px;text-align:center;font-size:17.5px;line-height:1;color:#a3a3a3">3</div>
<div class="a" style="left:1249.0px;top:479.5px;width:40px;text-align:center;font-size:17.5px;line-height:1;color:#a3a3a3">4</div>
<div class="a" style="left:1324.6px;top:479.5px;width:40px;text-align:center;font-size:17.5px;line-height:1;color:#a3a3a3">5</div>
<div class="a" style="left:1400.2px;top:479.5px;width:40px;text-align:center;font-size:17.5px;line-height:1;color:#a3a3a3">6</div>
<div class="a" style="left:1475.8px;top:479.5px;width:40px;text-align:center;font-size:17.5px;line-height:1;color:#a3a3a3">7</div>
<div class="a" style="left:1551.4px;top:479.5px;width:40px;text-align:center;font-size:17.5px;line-height:1;color:#a3a3a3">8</div>
<div class="a" style="left:1627.0px;top:479.5px;width:40px;text-align:center;font-size:17.5px;line-height:1;color:#a3a3a3">9</div>
<div class="a" style="left:1702.6px;top:479.5px;width:40px;text-align:center;font-size:17.5px;line-height:1;color:#a3a3a3">10</div>
<div class="a" style="left:1778.2px;top:479.5px;width:40px;text-align:center;font-size:17.5px;line-height:1;color:#a3a3a3">11</div>
<div class="a" style="left:1853.8px;top:479.5px;width:40px;text-align:center;font-size:17.5px;line-height:1;color:#a3a3a3">12</div>
<div class="a" style="left:1929.4px;top:479.5px;width:40px;text-align:center;font-size:17.5px;line-height:1;color:#a3a3a3">13</div>
<div class="a" style="left:2005.0px;top:479.5px;width:40px;text-align:center;font-size:17.5px;line-height:1;color:#a3a3a3">14</div>
<div class="a" style="left:2080.6px;top:479.5px;width:40px;text-align:center;font-size:17.5px;line-height:1;color:#a3a3a3">15</div>
<div class="a" style="left:2156.2px;top:479.5px;width:40px;text-align:center;font-size:17.5px;line-height:1;color:#a3a3a3">16</div>
<div class="a" style="left:2231.8px;top:479.5px;width:40px;text-align:center;font-size:17.5px;line-height:1;color:#a3a3a3">17</div>
<div class="a" style="left:2307.4px;top:479.5px;width:40px;text-align:center;font-size:17.5px;line-height:1;color:#a3a3a3">18</div>
<div class="a" style="left:144px;top:554px;width:26px;height:1106px;border:2px solid #4e4e4e;background:#222"></div>
<div class="a" style="left:144px;top:554px;width:26px;height:193px;background:#575757;border:2px solid #5d5d5d"></div>
<div class="a" style="left:137px;top:586.3px;width:40px;height:18px;text-align:center;font-size:17.5px;line-height:18px;color:#a3a3a3;transform:rotate(-90deg)">2</div>
<div class="a" style="left:137px;top:661.9px;width:40px;height:18px;text-align:center;font-size:17.5px;line-height:18px;color:#a3a3a3;transform:rotate(-90deg)">1</div>
<div class="a" style="left:137px;top:813.1px;width:40px;height:18px;text-align:center;font-size:17.5px;line-height:18px;color:#a3a3a3;transform:rotate(-90deg)">1</div>
<div class="a" style="left:137px;top:888.7px;width:40px;height:18px;text-align:center;font-size:17.5px;line-height:18px;color:#a3a3a3;transform:rotate(-90deg)">2</div>
<div class="a" style="left:137px;top:964.3px;width:40px;height:18px;text-align:center;font-size:17.5px;line-height:18px;color:#a3a3a3;transform:rotate(-90deg)">3</div>
<div class="a" style="left:137px;top:1039.9px;width:40px;height:18px;text-align:center;font-size:17.5px;line-height:18px;color:#a3a3a3;transform:rotate(-90deg)">4</div>
<div class="a" style="left:137px;top:1115.5px;width:40px;height:18px;text-align:center;font-size:17.5px;line-height:18px;color:#a3a3a3;transform:rotate(-90deg)">5</div>
<div class="a" style="left:137px;top:1191.1px;width:40px;height:18px;text-align:center;font-size:17.5px;line-height:18px;color:#a3a3a3;transform:rotate(-90deg)">6</div>
<div class="a" style="left:137px;top:1266.7px;width:40px;height:18px;text-align:center;font-size:17.5px;line-height:18px;color:#a3a3a3;transform:rotate(-90deg)">7</div>
<div class="a" style="left:137px;top:1342.3px;width:40px;height:18px;text-align:center;font-size:17.5px;line-height:18px;color:#a3a3a3;transform:rotate(-90deg)">8</div>
<div class="a" style="left:137px;top:1417.9px;width:40px;height:18px;text-align:center;font-size:17.5px;line-height:18px;color:#a3a3a3;transform:rotate(-90deg)">9</div>
<div class="a" style="left:137px;top:1493.5px;width:40px;height:18px;text-align:center;font-size:17.5px;line-height:18px;color:#a3a3a3;transform:rotate(-90deg)">10</div>
<div class="a" style="left:137px;top:1569.1px;width:40px;height:18px;text-align:center;font-size:17.5px;line-height:18px;color:#a3a3a3;transform:rotate(-90deg)">11</div>
<div class="a" style="left:137px;top:1644.7px;width:40px;height:18px;text-align:center;font-size:17.5px;line-height:18px;color:#a3a3a3;transform:rotate(-90deg)">12</div>
<svg style="left:0;top:0" width="3024" height="1724" viewBox="0 0 3024 1724"><path d="M758.7 484.0V491.0M777.6 482.5V492.5M796.5 484.0V491.0M834.3 484.0V491.0M853.2 482.5V492.5M872.1 484.0V491.0M909.9 484.0V491.0M928.8 482.5V492.5M947.7 484.0V491.0M985.5 484.0V491.0M1004.4 482.5V492.5M1023.3 484.0V491.0M1061.1 484.0V491.0M1080.0 482.5V492.5M1098.9 484.0V491.0M1136.7 484.0V491.0M1155.6 482.5V492.5M1174.5 484.0V491.0M1212.3 484.0V491.0M1231.2 482.5V492.5M1250.1 484.0V491.0M1287.9 484.0V491.0M1306.8 482.5V492.5M1325.7 484.0V491.0M1363.5 484.0V491.0M1382.4 482.5V492.5M1401.3 484.0V491.0M1439.1 484.0V491.0M1458.0 482.5V492.5M1476.9 484.0V491.0M1514.7 484.0V491.0M1533.6 482.5V492.5M1552.5 484.0V491.0M1590.3 484.0V491.0M1609.2 482.5V492.5M1628.1 484.0V491.0M1665.9 484.0V491.0M1684.8 482.5V492.5M1703.7 484.0V491.0M1741.5 484.0V491.0M1760.4 482.5V492.5M1779.3 484.0V491.0M1817.1 484.0V491.0M1836.0 482.5V492.5M1854.9 484.0V491.0M1892.7 484.0V491.0M1911.6 482.5V492.5M1930.5 484.0V491.0M1968.3 484.0V491.0M1987.2 482.5V492.5M2006.1 484.0V491.0M2043.9 484.0V491.0M2062.8 482.5V492.5M2081.7 484.0V491.0M2119.5 484.0V491.0M2138.4 482.5V492.5M2157.3 484.0V491.0M2195.1 484.0V491.0M2214.0 482.5V492.5M2232.9 484.0V491.0M2270.7 484.0V491.0M2289.6 482.5V492.5M2308.5 484.0V491.0M1062.6 503V508.5M1158.6 503V508.5M1254.6 503V508.5M1350.6 503V508.5M1446.6 503V508.5M1542.6 503V508.5M1638.6 503V508.5M1734.6 503V508.5M1830.6 503V508.5M1926.6 503V508.5M2022.6 503V508.5M153 614.2H159M151 633.1H161M153 652.0H159M153 689.8H159M151 708.7H161M153 727.6H159M153 765.4H159M151 784.3H161M153 803.2H159M153 841.0H159M151 859.9H161M153 878.8H159M153 916.6H159M151 935.5H161M153 954.4H159M153 992.2H159M151 1011.1H161M153 1030.0H159M153 1067.8H159M151 1086.7H161M153 1105.6H159M153 1143.4H159M151 1162.3H161M153 1181.2H159M153 1219.0H159M151 1237.9H161M153 1256.8H159M153 1294.6H159M151 1313.5H161M153 1332.4H159M153 1370.2H159M151 1389.1H161M153 1408.0H159M153 1445.8H159M151 1464.7H161M153 1483.6H159M153 1521.4H159M151 1540.3H161M153 1559.2H159M153 1597.0H159M151 1615.9H161M153 1634.8H159" stroke="#a3a3a3" stroke-width="2"/><path d="M151.0 557.5H161.0M153.0 576.4H159.0" stroke="#a3a3a3" stroke-width="2"/><path d="M958 469.5H976V475L967 487L958 475Z" fill="#3a3a3a" stroke="#a8a8a8" stroke-width="2"/><path d="M967 487L976 499.5V511H958V499.5Z" fill="#3a3a3a" stroke="#a8a8a8" stroke-width="2"/><path d="M958 499.5H976" stroke="#a8a8a8" stroke-width="2"/><path d="M2110 501V493.5L2119 487L2128 493.5V501Z" fill="#3a3a3a" stroke="#a8a8a8" stroke-width="2"/><rect x="143.5" y="474.5" width="28" height="29" fill="#222" stroke="#444" stroke-width="2"/><path d="M152 484H157V491H164V496H152Z" fill="#f4f4f4"/></svg>
<div class="a" style="left:724px;top:552px;width:1636px;height:1107px;background:#fff;border:2px solid #cccccc;border-bottom:none"></div>
<div class="a" style="left:965.5px;top:817px;font-size:33px;line-height:1;font-weight:bold;color:#3e5c8f;white-space:nowrap;letter-spacing:-0.3px">Here is an example doc</div>
<div class="a" style="left:1325px;top:811px;width:4px;height:44px;background:#3e5c8f"></div>
<div class="a" style="left:2908px;top:464px;width:26px;height:26px;background:#3a3a3a;border:2px solid #5a5a5a"></div>
<div class="a" style="left:2908px;top:492px;width:26px;height:591px;background:#3d3d3d;border:2px solid #5a5a5a"></div>
<div class="a" style="left:2908px;top:1630px;width:26px;height:26px;background:#3a3a3a;border:2px solid #5a5a5a"></div>
<svg style="left:0;top:0" width="3024" height="1724" viewBox="0 0 3024 1724"><path d="M2914.5 482H2927.5L2921 475.5Z" fill="#fff"/><path d="M2914.5 1639H2927.5L2921 1645.5Z" fill="#fff"/><path d="M2915.5 778.0H2926.5M2915.5 781.8H2926.5M2915.5 785.6H2926.5M2915.5 789.4H2926.5M2915.5 793.2H2926.5M2915.5 797.0H2926.5M2915.5 800.8H2926.5" stroke="#e8e8e8" stroke-width="1.8"/></svg>
<div class="a" style="left:138px;top:1658px;width:2798px;height:64px;background:#404040;border-top:2px solid #545454"></div>
<div class="a st" style="left:157px;top:1676.7px;line-height:1">Page 1 of 1</div>
<div class="a st" style="left:361px;top:1676.7px;line-height:1">Word count</div>
<div class="a st" style="left:1134px;top:1676.7px;line-height:1">All changes saved</div>
<div class="a st" style="left:2005px;top:1676.7px;line-height:1">English – United States</div>
<div class="a st" style="left:2721.5px;top:1676.7px;line-height:1">Zoom 100%</div>
<div class="a" style="left:2352px;top:1666px;width:48px;height:48px;border-radius:9px;background:#6a6a6a"></div>
<svg style="left:0;top:0" width="3024" height="1724" viewBox="0 0 3024 1724"><path d="M294 1660V1722M1986 1660V1722M2412.5 1660V1722M2519.5 1660V1722" stroke="#555" stroke-width="2"/><path d="M319 1677H343M319 1687H343M337 1697H343" stroke="#f2f2f2" stroke-width="2"/><text x="317.5" y="1702" font-family="Liberation Sans" font-weight="bold" font-size="12" fill="#8ab4f8" letter-spacing="0.8">12</text><path d="M2275 1692L2280 1697L2285 1692" fill="none" stroke="#f2f2f2" stroke-width="2"/><circle cx="2320" cy="1690" r="14.5" fill="none" stroke="#f2f2f2" stroke-width="2"/><ellipse cx="2320" cy="1690" rx="6.5" ry="14.5" fill="none" stroke="#f2f2f2" stroke-width="2"/><path d="M2305.5 1690H2334.5M2308 1682H2332M2308 1698H2332" stroke="#f2f2f2" stroke-width="2"/><path d="M2373 1703.3H2365a2 2 0 0 1-2-2V1678.7a2 2 0 0 1 2-2H2387a2 2 0 0 1 2 2V1693.5" fill="none" stroke="#f2f2f2" stroke-width="2"/><path d="M2370.5 1697.5L2376 1683L2381.5 1697.5M2372.3 1692.5H2379.7" fill="none" stroke="#f2f2f2" stroke-width="2"/><path d="M2378.5 1701L2384.3 1707L2393.5 1697" fill="none" stroke="#8ab4f8" stroke-width="2.2"/><path d="M2434 1681.1H2443.8M2434 1686.8H2449.5" stroke="#8ab4f8" stroke-width="2"/><path d="M2440.8 1701V1695.5a3 3 0 0 1 3-3L2458.5 1677.8a2.2 2.2 0 0 1 3.1 0L2464.2 1680.4a2.2 2.2 0 0 1 0 3.1L2446.2 1701Z M2455.5 1680.8L2461 1686.3" fill="none" stroke="#f2f2f2" stroke-width="2" stroke-linejoin="round"/><path d="M2485 1687.5L2490.5 1693L2496 1687.5" fill="none" stroke="#f2f2f2" stroke-width="2"/><rect x="2545.2" y="1675.4" width="21.3" height="28.8" rx="3" fill="none" stroke="#f2f2f2" stroke-width="2"/><path d="M2549.2 1684V1679.4H2553.5M2558.5 1679.4H2562.7V1684M2549.2 1696V1700.5H2553.5M2558.5 1700.5H2562.7V1696" fill="none" stroke="#8ab4f8" stroke-width="2"/><path d="M2610 1693.5V1678a2 2 0 0 1 2-2H2628.5a2 2 0 0 1 2 2V1693.5" fill="none" stroke="#f2f2f2" stroke-width="2"/><path d="M2607 1701H2617M2611 1697L2607 1701L2611 1705M2622.2 1701H2632.8M2628.8 1697L2632.8 1701L2628.8 1705" fill="none" stroke="#8ab4f8" stroke-width="2"/><path d="M2670 1689H2696" stroke="#f2f2f2" stroke-width="2"/><path d="M2877 1689H2905M2891 1675V1703" stroke="#f2f2f2" stroke-width="2"/></svg>
<svg style="left:0;top:0" width="3024" height="1724" viewBox="0 0 3024 1724"><path d="M2965.5 222.2V216.5L2982.8 199.2a2.5 2.5 0 0 1 3.5 0L2987.8 200.7a2.5 2.5 0 0 1 0 3.5L2970.5 222.2Z" fill="none" stroke="#5e5190" stroke-width="3.4" stroke-linejoin="round"/><path d="M2976.4 223.8L2981.8 217.9H2990.7V223.8Z" fill="#5e5190"/><path d="M2964.5 277.5V270.5H2971.5M2981 270.5H2988V277.5M2988 282V289H2981M2971.5 289H2964.5V282" fill="none" stroke="#5e5190" stroke-width="3.2"/><path d="M2965 349V358.5H2989V349M2977 352V339M2971 345L2977 339L2983 345" fill="none" stroke="#5e5190" stroke-width="3.2"/><path d="M2964 410.5V428H2990V410.5M2977 402V421M2970.5 414.5L2977 421L2983.5 414.5" fill="none" stroke="#5e5190" stroke-width="3.2"/><circle cx="2986.5" cy="473" r="3.6" fill="none" stroke="#5e5190" stroke-width="3"/><circle cx="2967.5" cy="483.5" r="3.6" fill="none" stroke="#5e5190" stroke-width="3"/><circle cx="2986.5" cy="494" r="3.6" fill="none" stroke="#5e5190" stroke-width="3"/><path d="M2970.5 481.5L2983.5 475M2970.5 485.5L2983.5 492" stroke="#5e5190" stroke-width="3"/><path d="M2618.5 357L2630.5 369L2642.5 357" fill="none" stroke="#f2f2f2" stroke-width="2"/></svg>
</body></html>
